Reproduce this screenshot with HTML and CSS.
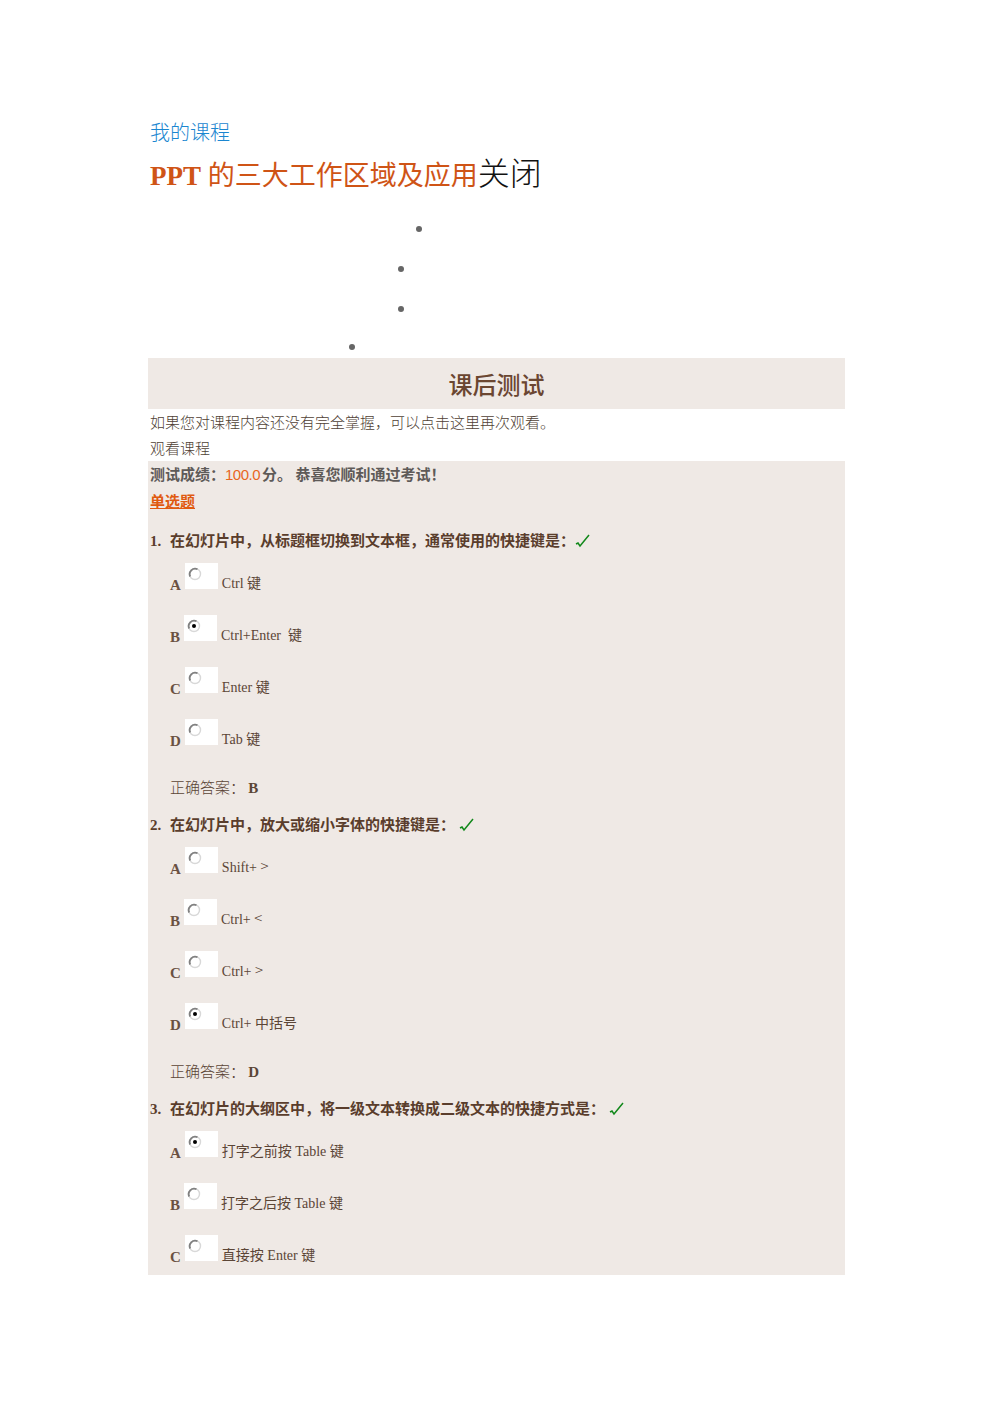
FILE: index.html
```html
<!DOCTYPE html>
<html lang="zh-CN">
<head>
    <meta charset="UTF-8">
    <title>PPT 的三大工作区域及应用</title>
    <link rel="stylesheet" href="styles.css">
</head>
<body>
<div class="container">
    <div class="breadcrumb"><a href="#">我的课程</a></div>
    <h1 class="title"><span class="course"><b>PPT</b> 的三大工作区域及应用</span><span class="close">关闭</span></h1>

    <ul class="dots">
        <li class="d1"></li>
        <li class="d2"></li>
        <li class="d3"></li>
        <li class="d4"></li>
    </ul>

    <div class="test-header">课后测试</div>
    <p class="hint">如果您对课程内容还没有完全掌握，可以点击这里再次观看。</p>
    <p class="hint">观看课程</p>

    <div class="test-body">
        <div class="score">测试成绩：<span class="num">100.0</span>分。 恭喜您顺利通过考试！</div>
        <div class="type">单选题</div>

        <!-- 第1题 -->
        <div class="question"><span class="qno">1.</span>在幻灯片中，从标题框切换到文本框，通常使用的快捷键是：<svg class="ok" width="16" height="14" viewBox="0 0 16 14"><path d="M1 10 L3 9 L5 12 L14 1" fill="none" stroke="#11881a" stroke-width="1.5"/></svg></div>
        <div class="option"><b>A</b><span class="radio"><svg width="14" height="14" viewBox="0 0 14 14"><circle cx="7" cy="7" r="5.5" fill="#fff" stroke="#d8d8d8" stroke-width="1.4"/><path d="M2.2 9.5 A5.5 5.5 0 0 1 9.5 2.2" fill="none" stroke="#808080" stroke-width="1.8"/></svg></span><span class="label">Ctrl 键</span></div>
        <div class="option"><b>B</b><span class="radio"><svg width="14" height="14" viewBox="0 0 14 14"><circle cx="7" cy="7" r="5.5" fill="#fff" stroke="#d8d8d8" stroke-width="1.4"/><path d="M2.2 9.5 A5.5 5.5 0 0 1 9.5 2.2" fill="none" stroke="#808080" stroke-width="1.8"/><circle cx="7" cy="7" r="2" fill="#000"/></svg></span><span class="label">Ctrl+Enter &nbsp;键</span></div>
        <div class="option"><b>C</b><span class="radio"><svg width="14" height="14" viewBox="0 0 14 14"><circle cx="7" cy="7" r="5.5" fill="#fff" stroke="#d8d8d8" stroke-width="1.4"/><path d="M2.2 9.5 A5.5 5.5 0 0 1 9.5 2.2" fill="none" stroke="#808080" stroke-width="1.8"/></svg></span><span class="label">Enter 键</span></div>
        <div class="option"><b>D</b><span class="radio"><svg width="14" height="14" viewBox="0 0 14 14"><circle cx="7" cy="7" r="5.5" fill="#fff" stroke="#d8d8d8" stroke-width="1.4"/><path d="M2.2 9.5 A5.5 5.5 0 0 1 9.5 2.2" fill="none" stroke="#808080" stroke-width="1.8"/></svg></span><span class="label">Tab 键</span></div>
        <div class="answer">正确答案： <b>B</b></div>

        <!-- 第2题 -->
        <div class="question"><span class="qno">2.</span>在幻灯片中，放大或缩小字体的快捷键是： <svg class="ok" width="16" height="14" viewBox="0 0 16 14"><path d="M1 10 L3 9 L5 12 L14 1" fill="none" stroke="#11881a" stroke-width="1.5"/></svg></div>
        <div class="option"><b>A</b><span class="radio"><svg width="14" height="14" viewBox="0 0 14 14"><circle cx="7" cy="7" r="5.5" fill="#fff" stroke="#d8d8d8" stroke-width="1.4"/><path d="M2.2 9.5 A5.5 5.5 0 0 1 9.5 2.2" fill="none" stroke="#808080" stroke-width="1.8"/></svg></span><span class="label">Shift+ <span class="cjk">&gt;</span></span></div>
        <div class="option"><b>B</b><span class="radio"><svg width="14" height="14" viewBox="0 0 14 14"><circle cx="7" cy="7" r="5.5" fill="#fff" stroke="#d8d8d8" stroke-width="1.4"/><path d="M2.2 9.5 A5.5 5.5 0 0 1 9.5 2.2" fill="none" stroke="#808080" stroke-width="1.8"/></svg></span><span class="label">Ctrl+ <span class="cjk">&lt;</span></span></div>
        <div class="option"><b>C</b><span class="radio"><svg width="14" height="14" viewBox="0 0 14 14"><circle cx="7" cy="7" r="5.5" fill="#fff" stroke="#d8d8d8" stroke-width="1.4"/><path d="M2.2 9.5 A5.5 5.5 0 0 1 9.5 2.2" fill="none" stroke="#808080" stroke-width="1.8"/></svg></span><span class="label">Ctrl+ <span class="cjk">&gt;</span></span></div>
        <div class="option"><b>D</b><span class="radio"><svg width="14" height="14" viewBox="0 0 14 14"><circle cx="7" cy="7" r="5.5" fill="#fff" stroke="#d8d8d8" stroke-width="1.4"/><path d="M2.2 9.5 A5.5 5.5 0 0 1 9.5 2.2" fill="none" stroke="#808080" stroke-width="1.8"/><circle cx="7" cy="7" r="2" fill="#000"/></svg></span><span class="label">Ctrl+ 中括号</span></div>
        <div class="answer">正确答案： <b>D</b></div>

        <!-- 第3题 -->
        <div class="question"><span class="qno">3.</span>在幻灯片的大纲区中，将一级文本转换成二级文本的快捷方式是： <svg class="ok" width="16" height="14" viewBox="0 0 16 14"><path d="M1 10 L3 9 L5 12 L14 1" fill="none" stroke="#11881a" stroke-width="1.5"/></svg></div>
        <div class="option"><b>A</b><span class="radio"><svg width="14" height="14" viewBox="0 0 14 14"><circle cx="7" cy="7" r="5.5" fill="#fff" stroke="#d8d8d8" stroke-width="1.4"/><path d="M2.2 9.5 A5.5 5.5 0 0 1 9.5 2.2" fill="none" stroke="#808080" stroke-width="1.8"/><circle cx="7" cy="7" r="2" fill="#000"/></svg></span><span class="label">打字之前按 Table 键</span></div>
        <div class="option"><b>B</b><span class="radio"><svg width="14" height="14" viewBox="0 0 14 14"><circle cx="7" cy="7" r="5.5" fill="#fff" stroke="#d8d8d8" stroke-width="1.4"/><path d="M2.2 9.5 A5.5 5.5 0 0 1 9.5 2.2" fill="none" stroke="#808080" stroke-width="1.8"/></svg></span><span class="label">打字之后按 Table 键</span></div>
        <div class="option"><b>C</b><span class="radio"><svg width="14" height="14" viewBox="0 0 14 14"><circle cx="7" cy="7" r="5.5" fill="#fff" stroke="#d8d8d8" stroke-width="1.4"/><path d="M2.2 9.5 A5.5 5.5 0 0 1 9.5 2.2" fill="none" stroke="#808080" stroke-width="1.8"/></svg></span><span class="label">直接按 Enter 键</span></div>
    </div>
</div>
</body>
</html>
```

FILE: styles.css
```css
* {
    margin: 0;
    padding: 0;
    box-sizing: border-box;
}

body {
    font-family: 'Liberation Serif', 'Noto Sans CJK SC', serif;
    font-size: 15px;
    color: #5b4536;
    background: #fff;
}

.container {
    width: 697px;
    margin: 0 auto;
    padding-top: 120px;
}

.breadcrumb {
    padding-left: 2px;
    line-height: 24px;
    font-size: 20px;
    font-family: 'Noto Sans CJK SC', sans-serif;
    font-weight: 300;
}

.breadcrumb a {
    color: #1a86d0;
    text-decoration: none;
}

.title {
    margin-top: 1px;
    padding-left: 2px;
    height: 56px;
    line-height: 52px;
    font-weight: normal;
}

.title .course {
    color: #cf5416;
    font-size: 27px;
    font-family: 'Liberation Serif', 'Noto Sans CJK SC', serif;
}

.title .course b {
    font-weight: bold;
}

.title .close {
    color: #111;
    font-size: 32px;
    font-family: 'Noto Sans CJK SC', sans-serif;
    font-weight: 300;
}

.dots {
    list-style: none;
    padding-top: 18px;
}

.dots li {
    height: 20px;
    display: flex;
    align-items: center;
}

.dots li::before {
    content: '';
    width: 6px;
    height: 6px;
    border-radius: 50%;
    background: #666;
}

.dots .d1 { padding-left: 268px; }
.dots .d2 { padding-left: 250px; margin-top: 20px; }
.dots .d3 { padding-left: 250px; margin-top: 20px; }
.dots .d4 { padding-left: 201px; margin-top: 18px; }

.test-header {
    margin-top: 1px;
    height: 51px;
    line-height: 51px;
    text-align: center;
    background: #efe9e5;
    color: #6b4631;
    font-size: 24px;
    font-family: 'Noto Sans CJK SC', sans-serif;
    font-weight: 500;
}

.hint {
    padding-left: 2px;
    line-height: 26px;
    font-family: 'Noto Sans CJK SC', sans-serif;
    font-weight: 300;
    color: #4f3f35;
}

.test-body {
    background: #efe9e5;
    padding: 0 2px 14px;
}

.score {
    line-height: 26px;
    font-weight: bold;
    color: #5e5a58;
    font-family: 'Noto Sans CJK SC', sans-serif;
}

.score .num {
    color: #e8661d;
    font-weight: normal;
    font-family: 'Liberation Sans', sans-serif;
    letter-spacing: -0.5px;
    margin-right: 2px;
}

.type {
    line-height: 26px;
    font-weight: bold;
    color: #e05a10;
    text-decoration: underline;
    font-family: 'Noto Sans CJK SC', sans-serif;
}

.question {
    margin-top: 14px;
    line-height: 26px;
    font-weight: bold;
    color: #5a3d2c;
}

.answer + .question {
    margin-top: 11px;
}

.question .qno {
    display: inline-block;
    width: 20px;
}

.question .ok {
    vertical-align: -2px;
}

.option {
    display: flex;
    align-items: flex-end;
    height: 26px;
    margin-top: 26px;
    padding-left: 20px;
    line-height: 16px;
}

.question + .option {
    margin-top: 9px;
}

.option b {
    font-size: 15px;
    color: #6a5142;
    margin-bottom: -4px;
}

.option .radio {
    width: 33px;
    height: 26px;
    margin-left: 4px;
    margin-right: 4px;
    padding: 4px 0 0 3px;
    background: #fff;
    line-height: 0;
}

.option .label {
    font-size: 14px;
    margin-bottom: -3px;
}

.option .cjk {
    font-family: 'Noto Sans CJK SC', sans-serif;
    font-weight: 300;
    font-size: 15px;
}

.answer {
    margin-top: 29px;
    padding-left: 20px;
    line-height: 26px;
    font-family: 'Noto Sans CJK SC', sans-serif;
    font-weight: 300;
}

.answer b {
    font-family: 'Liberation Serif', serif;
    font-weight: bold;
}
```
